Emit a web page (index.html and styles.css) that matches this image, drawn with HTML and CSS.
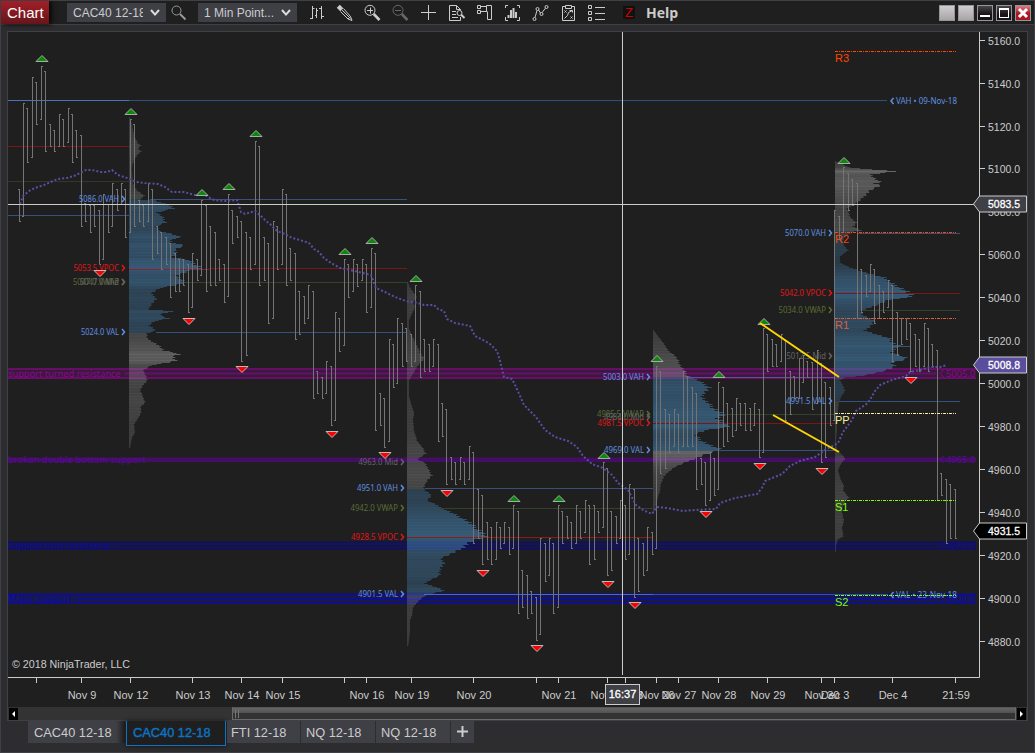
FILE: index.html
```html
<!DOCTYPE html>
<html lang="en">
<head>
    <meta charset="UTF-8">
    <meta name="viewport" content="width=device-width, initial-scale=1.0">
    <title>Chart</title>
    <link rel="stylesheet" href="styles.css">
</head>
<body>
    <div class="window">
        <header class="toolbar">
            <div class="chart-btn">Chart</div>
            <div class="combo combo-symbol"><span>CAC40 12-18</span><svg width="10" height="8" viewBox="0 0 10 8"><path d="M1 1L5 5.6L9 1" class="caret"/></svg></div>
            <svg class="search" width="16" height="16" viewBox="0 0 16 16"><circle cx="5.5" cy="5.5" r="4.5"/><path d="M9 9L14.5 14.5" class="thick"/></svg>
            <div class="combo combo-interval"><span>1 Min Point...</span><svg width="10" height="8" viewBox="0 0 10 8"><path d="M1 1L5 5.6L9 1" class="caret"/></svg></div>
            <div class="icons">
                <svg viewBox="0 0 18 18"><path d="M4.5 2v13M2 14.5h2M4.5 4.5h2M8.500 4v10M7 11.500h1M9 6.500h1M13.500 2v13M11 4.500h2M14 12.500h2"/></svg>
                <svg viewBox="0 0 18 18"><path d="M1.500 4.500L4.500 1.500M3.500 6.500L6.500 3.500M2.500 5.500L5.500 2.500" class="thick"/><path d="M4.500 7.500L12 15L16 16.500L14.500 12.500L7.500 4.500M6 6L14.500 14.500M12 15L14.500 12.500"/></svg>
                <svg viewBox="0 0 18 18"><circle cx="6" cy="6.300" r="5"/><path d="M3 6.500h6M6.500 3.500v6"/><path d="M9.700 10L15.500 16" class="handle"/></svg>
                <svg viewBox="0 0 18 18" class="off"><circle cx="6" cy="6.300" r="5"/><path d="M3 6.500h6"/><path d="M9.700 10L15.500 16" class="handle"/></svg>
                <svg viewBox="0 0 18 18"><path d="M1 8.500h15M8.500 1v15"/></svg>
                <svg viewBox="0 0 18 18"><path d="M12.500 13v3.500h-11v-15h7l4 4v1M8.500 1.500v4h4M4 7.500h4M4 10.500h4M4 13.500h6"/><circle cx="11.500" cy="9" r="2.500"/><path d="M13.200 10.800L16.500 14" class="thick"/></svg>
                <svg viewBox="0 0 18 18"><path d="M1.500 1.500h3v3h-3zM1.500 6.500h3v3h-3zM5 2.500h5M5 7.500h6M10.500 1.500h5v14h-4v-8M10.500 1.500v6"/></svg>
                <svg viewBox="0 0 18 18"><path d="M4 1.500H1.500V4M13 1.500h2.500V4M1.500 13v3.500H4M15.500 13v3.500H13"/><path d="M4.500 14v-3M7 14V6M9.500 14V4M12 14V8" class="thick"/></svg>
                <svg viewBox="0 0 18 18"><circle cx="2.500" cy="15" r="1.500"/><circle cx="5.500" cy="5" r="1.500"/><circle cx="9.500" cy="10" r="1.500"/><circle cx="14.500" cy="3" r="1.500"/><path d="M3 13.500L5 6.500M6.500 6L8.500 9M10 8.500L13.500 4.200"/></svg>
                <svg viewBox="0 0 18 18"><path d="M5 2.500H2.500v14h12v-14H12M5.500 1.500h6v3h-6zM4.500 6.500l2 2M6.500 6.500l-2 2M10.500 12.500l2 2M12.500 12.500l-2 2M4.500 14.500l3-3 1-3 4-2M9.500 6.500h3v2"/></svg>
                <svg viewBox="0 0 18 18"><path d="M.500 1.500h3v3h-3zM.500 7.500h3v3h-3zM.500 13.500h3v3h-3zM7 3.500h10M7 9.500h10M7 15.500h10"/></svg>
            </div>
            <div class="z-icon">Z</div>
            <div class="help">Help</div>
            <div class="win-buttons">
                <i class="blank"></i>
                <i class="blank"></i>
                <i class="dark"><svg viewBox="0 0 14 14"><path d="M2 9h10v2H2z"/></svg></i>
                <i class="dark"><svg viewBox="0 0 14 14"><path d="M2 2h10v10H2zM3 4v7h8V4z" fill-rule="evenodd"/></svg></i>
                <i class="close"><svg viewBox="0 0 14 14"><path d="M3 3L11 11M11 3L3 11" class="cross"/></svg></i>
            </div>
        </header>
        <main class="panel">
            <svg id="chart" viewBox="8 32 1019 675" width="1019" height="675"></svg>
            <div class="scrollbar">
                <div class="arrow"><svg viewBox="0 0 9 12"><path d="M6 3v6L3 6z"/></svg></div>
                <div class="track"><div class="thumb"></div></div>
                <div class="arrow"><svg viewBox="0 0 9 12"><path d="M3 3v6L6 6z"/></svg></div>
            </div>
        </main>
        <nav class="tabs">
            <div class="tab first">CAC40 12-18</div>
            <div class="tab active">CAC40 12-18</div>
            <div class="tab fti">FTI 12-18</div>
            <div class="tab">NQ 12-18</div>
            <div class="tab">NQ 12-18</div>
            <div class="tab plus"><svg width="11" height="11" viewBox="0 0 11 11"><path d="M5.500 0v11M0 5.500h11"/></svg></div>
        </nav>
    </div>
    <script src="chart.js"></script>
</body>
</html>
```
FILE: styles.css
```css
body{
    margin: 0px;
    background: #2d2d30;
    font-family: "Liberation Sans", Arial, sans-serif;
    color: #ccc;
}
.window{
    box-sizing: border-box;
    width: 1035px;
    height: 753px;
    border: 1px solid #3f3f46;
    display: flex;
    flex-direction: column;
    overflow: hidden;
}
.toolbar{
    height: 23px;
    flex: none;
    display: flex;
    align-items: center;
    background: #1f1f1f;
    border-bottom: 1px solid #3f3f46;
}
.chart-btn{
    width: 48px;
    height: 23px;
    box-sizing: border-box;
    padding-left: 6px;
    font-size: 15px;
    line-height: 23px;
    color: #fff;
    background: linear-gradient(#a21e27, #65161b);
    box-shadow: 2px 0 5px #000;
}
.combo{
    box-sizing: border-box;
    width: 99px;
    height: 19px;
    padding: 0 6px;
    background: #3f3f46;
    display: flex;
    align-items: center;
    justify-content: space-between;
    font-size: 12px;
}
.combo span{
    overflow: hidden;
    white-space: nowrap;
    width: 70px;
}
.combo-symbol{ margin-left: 18px; }
.combo-interval{ margin-left: 11px; }
.combo-interval span{ width: 74px; }
.caret{
    fill: none;
    stroke: #ddd;
    stroke-width: 2;
}
.search{
    margin-left: 5px;
    fill: none;
    stroke: #999;
}
.icons{
    display: flex;
    margin-left: 6px;
}
.icons svg{
    width: 18px;
    height: 18px;
    margin: 0 5px;
    fill: none;
    stroke: #ccc;
}
.icons .off{ stroke: #666; }
.thick{ stroke-width: 2; }
.handle{ stroke-width: 2.6; }
.z-icon{
    margin-left: 12px;
    width: 12px;
    height: 13px;
    background: #111;
    color: #d00000;
    font-size: 13px;
    line-height: 14px;
    text-align: center;
}
.help{
    margin-left: 11px;
    font: bold 14px/22px "Open Sans", sans-serif;
}
.win-buttons{
    margin-left: auto;
    margin-right: 3px;
    display: flex;
    gap: 3px;
}
.win-buttons i{
    width: 14px;
    height: 14px;
    border: 1px solid #96969a;
    display: block;
}
.win-buttons svg{
    display: block;
    fill: #fff;
}
.blank{ background: linear-gradient(#cfcdce, #a9a5a7); }
.dark{ background: linear-gradient(#48464a, #171317 60%); }
.close{ background: linear-gradient(#d77a80, #a81822 55%); }
.cross{
    stroke: #fff;
    stroke-width: 3;
}
.panel{
    flex: none;
    margin: 6px 6px 0;
    width: 1019px;
    height: 688px;
    border: 1px solid #3f3f46;
    background: #1f1f1f;
}
#chart{ display: block; }
.scrollbar{
    display: flex;
    height: 13px;
    padding: 0 1px;
    background: #333;
}
.arrow{
    width: 9px;
    margin-top: 1px;
    background: #000;
}
.arrow svg{
    display: block;
    fill: #fff;
}
.track{
    flex: 1;
    padding: 0 1px 0 214px;
}
.thumb{
    box-sizing: border-box;
    height: 13px;
    border: 1px solid #6a6a6a;
    border-top-color: #555;
    background: linear-gradient(90deg, transparent 2px, #777 2px 3px, transparent 3px 5px, #777 5px 6px, transparent 6px) no-repeat 0 2px / 10px 8px, linear-gradient(#666, #505050 50%, #333 50%);
}
.tabs{
    display: flex;
    align-items: flex-start;
    gap: 1px;
    margin-left: 27px;
}
.tab{
    box-sizing: border-box;
    height: 22px;
    width: 74px;
    padding-left: 5px;
    font-size: 12.8px;
    line-height: 23px;
    white-space: nowrap;
    background: #3f3f46;
}
.first{
    width: 97px;
    padding-left: 6px;
    background: linear-gradient(90deg, #3f3f46 88px, #202022);
}
.active{
    width: 100px;
    height: 25px;
    padding-left: 6px;
    border: 1px solid #0c74c4;
    border-top: 0;
    background: #1f1f1f;
    color: #0c74c4;
    -webkit-text-stroke: .4px #0c74c4;
    box-shadow: 0 0 4px #111;
}
.fti{
    width: 73px;
    padding-left: 4px;
}
.plus{
    width: 23px;
    padding: 5px 6px;
    line-height: 0;
}
.plus path{
    stroke: #ccc;
    stroke-width: 2;
}

/* chart drawing */
.bars{
    fill: none;
    stroke: #747474;
}
.average{
    fill: none;
    stroke: #5a4ea4;
    stroke-width: 2;
    stroke-dasharray: 2 2;
}
.up{
    fill: #0a8a0a;
    stroke: #aaa;
}
.down{
    fill: #f00;
    stroke: #bbb;
}
.trend{
    stroke: #ffd700;
    stroke-width: 2;
}
.cross-line, .axis{
    fill: none;
    stroke: #ccc;
}
.axis-text{
    font-size: 11px;
    fill: #ccc;
}
.tag-text{
    font-size: 11px;
    fill: #fff;
    stroke: #fff;
    stroke-width: .3px;
}
.label{
    font: 8px "Noto Sans", sans-serif;
}
.zone-text{
    font: 9.5px "Noto Sans", sans-serif;
}
.pivot-text{ font-size: 11px; }
.pivot{ stroke-dasharray: 3 1 1 1; }
```
FILE: chart.js
```js
const chart = document.getElementById('chart');

// bars: x, high, low
const bars = [
    [19,189,221],[23,103,216],[27,108,162],[32,77,157],[36,82,124],[41,66,119],[45,71,151],[50,124,146],[54,130,151],[59,114,146],
    [63,119,146],[68,108,142],[72,114,162],[76,130,157],[81,135,226],[85,203,221],[90,205,232],[94,205,226],[99,210,264],[103,194,259],
    [108,204,232],[112,183,226],[117,189,210],[121,183,204],[125,189,237],[130,119,232],[134,124,226],[139,200,221],[143,205,226],[148,183,221],
    [152,189,259],[157,226,253],[161,232,269],[166,237,264],[170,243,297],[175,253,291],[179,259,291],[183,259,285],[188,264,312],[192,253,307],
    [197,259,280],[201,200,275],[206,205,291],[210,226,285],[215,232,285],[219,259,280],[224,264,302],[228,194,296],[232,210,243],[237,216,237],
    [241,221,361],[246,232,355],[250,237,269],[255,141,264],[259,146,285],[264,237,280],[268,243,323],[273,221,318],[277,226,269],[282,189,264],
    [286,194,285],[290,248,280],[295,253,339],[299,291,334],[304,296,323],[308,285,318],[313,291,398],[317,371,393],[322,377,398],[326,361,393],
    [331,366,425],[335,312,420],[339,318,351],[344,259,345],[348,264,297],[353,259,291],[357,264,286],[362,259,280],[366,264,312],[371,248,307],
    [375,253,430],[380,393,425],[384,398,447],[389,339,441],[393,344,387],[397,318,383],[402,323,366],[406,328,361],[411,334,366],[415,285,361],
    [420,291,377],[424,339,371],[429,344,371],[433,339,366],[438,344,441],[442,403,436],[446,409,484],[451,457,479],[455,462,484],[460,457,479],
    [464,462,484],[469,446,479],[473,452,543],[478,489,538],[482,495,564],[487,522,559],[491,527,564],[496,522,559],[500,527,548],[504,522,543],
    [509,527,554],[513,505,548],[518,511,613],[522,570,607],[527,575,618],[531,591,613],[536,597,640],[540,538,634],[545,543,581],[549,538,575],
    [553,543,613],[558,505,607],[562,511,543],[567,516,538],[571,522,548],[576,505,543],[580,511,538],[585,500,532],[589,505,564],[594,505,559],
    [598,511,532],[603,462,527],[607,468,575],[611,511,570],[616,516,543],[620,500,538],[625,505,559],[629,484,554],[634,489,597],[638,538,591],
    [643,543,575],[647,527,570],[652,532,554],[656,366,548],[660,371,473],[665,409,468],[669,414,452],[674,409,446],[678,414,452],[683,371,446],
    [687,376,446],[692,387,446],[696,393,489],[701,458,484],[705,462,505],[710,452,500],[714,458,495],[718,382,489],[723,387,446],[727,403,441],
    [732,408,436],[736,398,430],[740,403,425],[745,403,430],[750,408,430],[754,403,425],[759,409,457],[763,328,452],[767,334,371],[772,339,366],
    [776,344,366],[781,334,361],[785,340,420],[790,371,414],[794,376,398],[799,358,398],[803,355,382],[807,361,377],[812,362,409],[817,350,403],
    [821,363,462],[825,382,457],[830,387,425],[834,210,420],[839,216,238],[843,167,232],[848,173,210],[852,179,205],[857,183,318],[861,269,312],
    [866,275,296],[870,264,291],[874,269,323],[879,285,318],[883,291,312],[888,280,307],[892,285,361],[897,312,355],[901,318,344],[906,318,339],
    [910,323,371],[915,334,366],[919,339,371],[924,323,366],[928,328,371],[932,344,366],[937,350,500],[941,473,495],[946,479,543],[950,484,538],
    [955,489,538]
];

const average = '20,204 23,196 29,191 35,188 44,185 53,181 58,179 67,178 74,176 80,173 86,170 92,170 100,172 107,172 112,170 118,175 130,179 136,182 145,183 158,184 165,187 172,192 184,192 195,195 203,194 214,200 225,201 237,200 241,212 245,214 255,211 261,216 266,221 270,224 277,231 285,234 292,238 300,240 309,243 314,249 319,252 324,258 331,263 340,268 350,270 363,273 371,275 376,288 385,292 395,297 406,301 418,303 424,305 434,305 438,309 444,311 447,319 455,323 470,326 475,336 485,341 490,344 497,351 500,361 504,377 512,379 516,387 524,405 536,417 545,430 555,437 568,441 577,447 583,456 592,464 603,468 612,475 618,483 628,490 636,505 643,510 652,514 657,507 667,508 683,511 695,510 716,509 720,503 735,498 757,494 762,488 765,481 782,474 790,466 800,461 815,457 825,450 838,443 843,432 852,420 856,411 868,403 875,391 880,385 892,380 906,376 910,372 920,370 930,367 940,367 947,365';

// volume profiles: rows are [y, width], the value area sits between vah and val
const profiles = [
    { x: 129, vah: 199, val: 333, rows: [[117,1],[124,3],[130,4],[137,6],[143,9],[145,12],[148,9],[151,12],[155,8],[160,5],[166,3],[170,3],[183,4],[190,8],[195,15],[199,12],[200,26],[204,38],[208,45],[212,28],[216,33],[222,37],[226,27],[230,30],[234,45],[237,52],[239,41],[242,43],[245,56],[247,50],[250,45],[253,49],[257,43],[259,58],[264,67],[268,73],[271,57],[275,48],[277,50],[282,56],[285,45],[288,30],[293,22],[298,28],[304,22],[309,20],[311,46],[313,32],[316,33],[318,40],[321,25],[325,20],[330,27],[333,18],[338,18],[345,30],[350,34],[352,46],[354,50],[356,44],[360,46],[362,40],[365,22],[370,14],[375,17],[380,18],[385,14],[390,11],[396,14],[402,16],[406,12],[412,12],[418,9],[424,5],[432,6],[437,3],[448,1]] },
    { x: 407, vah: 489, val: 595, rows: [[282,1],[287,3],[297,10],[302,6],[307,8],[315,4],[320,2],[328,2],[335,5],[345,10],[352,13],[358,17],[363,13],[368,9],[375,5],[380,2],[395,2],[403,4],[412,7],[420,6],[430,7],[440,10],[448,16],[453,19],[459,10],[462,18],[470,22],[475,25],[480,20],[487,17],[490,18],[495,25],[500,20],[505,31],[510,40],[515,50],[520,60],[527,68],[532,75],[537,78],[539,70],[543,60],[548,55],[553,45],[558,33],[562,38],[568,33],[575,33],[580,22],[583,18],[587,30],[590,37],[594,22],[596,17],[600,12],[607,6],[615,5],[620,3],[630,3],[640,2],[646,1]] },
    { x: 653, vah: 377, val: 451, rows: [[330,1],[337,6],[343,11],[350,15],[355,22],[360,25],[366,28],[371,32],[375,34],[380,45],[385,54],[387,57],[393,50],[397,50],[400,52],[407,60],[414,70],[418,65],[422,71],[424,76],[427,72],[430,52],[434,42],[440,48],[446,60],[449,68],[451,63],[454,52],[458,42],[463,30],[467,21],[471,16],[476,11],[483,8],[490,7],[500,4],[505,3],[512,1]] },
    { x: 835, vah: 231, val: 401, rows: [[161,1],[167,15],[169,37],[171,63],[172,50],[174,36],[178,40],[182,46],[183,38],[185,46],[190,35],[195,30],[200,25],[204,18],[208,12],[212,14],[217,15],[222,22],[226,18],[230,26],[231,20],[236,10],[240,8],[245,9],[250,13],[256,5],[262,5],[267,15],[272,30],[277,50],[282,55],[287,65],[291,72],[294,75],[297,76],[299,55],[306,38],[311,26],[315,28],[320,40],[325,36],[330,30],[335,45],[338,55],[344,60],[346,72],[348,58],[352,58],[358,72],[362,58],[366,60],[370,50],[375,30],[377,10],[380,5],[385,8],[390,10],[395,7],[401,4],[410,3],[422,2],[430,2],[440,1],[450,2],[455,8],[458,10],[465,5],[470,3],[480,6],[485,9],[490,8],[497,14],[500,11],[505,8],[512,7],[520,9],[527,7],[532,8],[536,8],[539,3],[545,1],[552,1]] }
];

const blue = '#5f8fe0', red = '#e01616', olive = '#5a6b34', grey = '#646464';
const blueLine = '#34527d', redLine = '#7d1517', oliveLine = '#35422b';

// x1, x2, y, color
const levels = [
    [8,129,100,'#4a73b5'],[129,887,100,'#2f4f7c'],[8,129,146,redLine],[8,129,181,'#34382a'],[8,129,215,blueLine],
    [150,407,199,blueLine],[129,209,269,'#8c2030'],[209,407,268,redLine],[185,407,282,oliveLine],[156,407,332,blueLine],
    [425,653,488,blueLine],[440,653,508,oliveLine],[407,653,537,'#8a1c20'],[424,653,594,'#446cc0'],[653,888,594,'#3050b0'],
    [685,835,377,'#6a4a9a'],[723,835,414,oliveLine],[653,835,423,redLine],[720,835,450,blueLine],
    [857,960,233,blueLine],[835,960,293,redLine],[861,960,310,oliveLine],[839,960,401,blueLine]
];

// x start, chevron x, y, text, color
const labels = [
    [79,122,199,'5086.0 VAH',blue],[73.5,122,268,'5053.5 VPOC',red],[73,122,282,'5047.0 VWAP',olive],[80,122,282,'5047.0 Mid',grey],[81,122,332,'5024.0 VAL',blue],
    [358.5,401,462,'4963.0 Mid',grey],[357,401,488,'4951.0 VAH',blue],[350.5,401,508,'4942.0 VWAP',olive],[351,401,537,'4928.5 VPOC',red],[358,401,594,'4901.5 VAL',blue],
    [603,647,377,'5003.0 VAH',blue],[597,647,414,'4985.5 VWAP',olive],[604,647,417,'4984.0 Mid',grey],[597.5,647,423,'4981.5 VPOC',red],[604,647,450,'4969.0 VAL',blue],
    [785,829,233,'5070.0 VAH',blue],[780,829,293,'5042.0 VPOC',red],[778.5,829,310,'5034.0 VWAP',olive],[786.5,829,356,'5012.5 Mid',grey],[786,829,401,'4991.5 VAL',blue]
];

const zones = [
    { y: 368, h: 11, fill: '#381a3a', line: '#660e68', lines: [[368,2],[372.500,2],[377,2]], text: 'support turned resistance', end: 120.5, price: '5005.0', color: '#960096', ty: 377 },
    { y: 457.500, h: 4.500, fill: '#430e63', line: '#430e63', lines: [], text: 'broken double bottom support', end: 145.5, price: '4965.0', color: '#5a0a96', ty: 463 },
    { y: 541.500, h: 8, fill: '#161648', line: '#10105c', lines: [[541.500,1.500],[545,1.500],[548,1.500]], text: 'Support turn resistance', end: 110.5, price: '4925.0', color: '#0a0aa0', ty: 549 },
    { y: 593.500, h: 10, fill: '#191946', line: '#0f0f8c', lines: [[593.500,2],[598,2],[602,1.800]], text: 'Major support', end: 71, price: '4900.0', color: '#0a0ab8', ty: 602 }
];

const pivots = [
    [51,'R3','#ff4500',62],[232,'R2','#ff4500',243],[318,'R1','#d9603c',329],[413,'PP','#f5ee9e',424],[500,'S1','#7fff00',511],[595,'S2','#7fff00',606]
];

const ups = [[42,62],[131,115],[256,137],[202,196],[229,190],[345,255],[372,244],[416,282],[514,502],[559,502],[604,459],[657,362],[719,378],[764,325],[844,164]];
const downs = [[100,270],[189,318],[242,366],[332,431],[385,452],[447,490],[483,570],[537,645],[608,581],[635,602],[706,511],[760,463],[822,468],[911,377]];

const dates = [
    [36,''],[81,'Nov 9'],[130,'Nov 12'],[192,'Nov 13'],[241,'Nov 14'],[282,'Nov 15'],[344,''],[366,'Nov 16'],[411,'Nov 19'],[473,'Nov 20'],
    [536,''],[558,'Nov 21'],[607,'Nov 22'],[625,'Nov 23'],[656,'Nov 26'],[678,'Nov 27'],[718,'Nov 28'],[767,'Nov 29'],[821,'Nov 30'],[834,'Dec 3'],[892,'Dec 4'],[955,'21:59']
];

function rect(x, y, w, h, fill, extra = ''){
    return `<rect x="${x}" y="${y}" width="${w}" height="${h}" fill="${fill}" ${extra}/>`;
}

function text(x, y, cls, value, fill, width, anchor){
    return `<text x="${x}" y="${y}" class="${cls}"${fill ? ` fill="${fill}"` : ''}${width ? ` textLength="${width}" lengthAdjust="spacingAndGlyphs"` : ''}${anchor ? ` text-anchor="${anchor}"` : ''}>${value}</text>`;
}

function drawProfile(p){
    let out = '';
    const max = Math.max(...p.rows.map(r => r[1]));
    for(let i = 0; i < p.rows.length - 1; i++){
        const [y0, w0] = p.rows[i];
        const [y1, w1] = p.rows[i + 1];
        for(let y = y0; y < y1; y++){
            const noise = ((y * 37) % 11 - 5) / 5;
            let w = w0 + (w1 - w0) * (y - y0) / (y1 - y0);
            w = Math.max(1, w + noise * w * 0.05);
            const inside = y >= p.vah && y < p.val;
            const alpha = (inside ? 0.28 : 0.2) + (inside ? 0.36 : 0.42) * w / max + (y % 3 == 0 ? 0.03 : 0);
            out += rect(p.x, y, w.toFixed(1), 1, inside ? '#437aa5' : '#a0a0a0', `opacity="${alpha.toFixed(2)}"`);
        }
    }
    return out;
}

function drawTag(y, value, fill){
    return `<path d="M973.500 ${y}L979.500 ${y - 8}H1026.500V${y + 8}H979.500Z" fill="${fill}" stroke="#ccc"/>` + text(988, y + 4, 'tag-text', value, '', 32);
}

let svg = '';

for(const z of zones){
    svg += rect(8, z.y, 968, z.h, z.fill);
    z.lines.forEach(([y, h], i) => {
        const middle = i == 1;
        svg += rect(middle ? z.end + 4 : 8, y, middle ? 932 - z.end : 968, h, z.line);
    });
    svg += text(8, z.ty, 'zone-text', z.text, z.color, z.end - 8);
    svg += `<path d="M943.500 ${z.ty - 7}L940 ${z.ty - 3.5}L943.500 ${z.ty}" fill="none" stroke="${z.color}"/>`;
    svg += text(946, z.ty, 'zone-text', z.price, z.color, 29);
}

for(const p of profiles) svg += drawProfile(p);
for(const [x1, x2, y, color] of levels) svg += rect(x1, y, x2 - x1, 1, color);

let d = '';
bars.forEach(([x, top, bottom], i) => {
    const rising = i > 0 && top < bars[i - 1][1];
    d += `M${x + .5} ${top}V${bottom + 1}`;
    d += rising ? `M${x} ${top + .5}h2M${x - 1} ${bottom + .5}h2` : `M${x - 1} ${top + .5}h2M${x} ${bottom + .5}h2`;
});
svg += `<path class="bars" d="${d}"/>`;
svg += `<polyline class="average" points="${average}"/>`;

for(const [x, cx, y, value, color] of labels){
    svg += text(x, y + 3, 'label', value, color, cx - 3 - x);
    svg += `<path d="M${cx} ${y - 3}L${cx + 2.5} ${y}L${cx} ${y + 3}" fill="none" stroke="${color}" stroke-width="1.500"/>`;
}
for(const [y, value] of [[101,'VAH • 09-Nov-18'],[595,'VAL • 23-Nov-18']]){
    svg += `<path d="M893.500 ${y - 3}L891 ${y}L893.500 ${y + 3}" fill="none" stroke="${blue}" stroke-width="1.500"/>`;
    svg += text(896, y + 3, 'label', value, blue, 61);
}

for(const [y, name, color, ty] of pivots){
    svg += `<path class="pivot" d="M835 ${y + .5}H956" stroke="${color}"/>`;
    svg += text(835, ty, 'pivot-text', name, color);
}

for(const [x, y] of ups) svg += `<path class="up" d="M${x - 6} ${y - .5}L${x} ${y - 6.5}L${x + 6} ${y - .5}Z"/>`;
for(const [x, y] of downs) svg += `<path class="down" d="M${x - 6} ${y + .5}L${x} ${y + 6.5}L${x + 6} ${y + .5}Z"/>`;

svg += '<path class="trend" d="M760 323L839 377M773 415L839 452"/>';
svg += '<path class="cross-line" d="M8 204.500H974M622.500 32V675"/>';

// axes
svg += '<path class="axis" d="M979.500 32V677.500H8"/>';
for(let i = 0; i < 15; i++){
    const y = Math.floor(41.2 + i * 42.93);
    svg += `<path class="axis" d="M980 ${y - .5}h5"/>` + text(988, y + 4, 'axis-text', (5160 - i * 20) + '.0', '', 32);
}
for(const [x, name] of dates){
    svg += `<path class="axis" d="M${x + .5} 678v5"/>` + text(x + 1, 699, 'axis-text', name, '', 0, 'middle');
}
svg += drawTag(204, '5083.5', '#3f3f46') + drawTag(365, '5008.8', '#5a4d9e') + drawTag(531, '4931.5', '#000');
svg += rect(605.5, 684.5, 34, 20, '#3f3f46', 'stroke="#ccc"') + text(622.5, 698, 'tag-text', '16:37', '', 0, 'middle');
svg += text(12, 668, 'axis-text', '© 2018 NinjaTrader, LLC', '', 118);

chart.innerHTML = svg;
```
